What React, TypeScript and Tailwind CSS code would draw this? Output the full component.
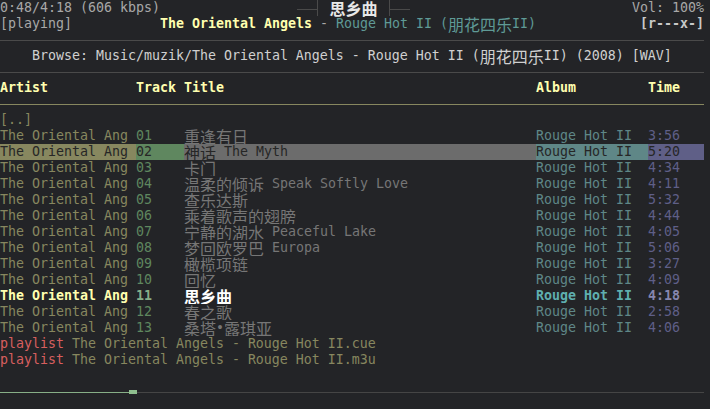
import React from "react";

const CJK = /([\u2e80-\u9fff\uf900-\ufaff\uff00-\uffef]+)/;

// splits text into latin / CJK runs; CJK is double width (16px) like in the terminal
function Txt({ s }: { s: string }) {
  return (
    <>
      {s.split(CJK).map((p, i) =>
        i % 2 === 1 ? (
          <span key={i} className="h-4 font-['Noto_Sans_CJK_SC',sans-serif] text-[16px] leading-4">
            {p}
          </span>
        ) : p ? (
          <span key={i} className="h-4 leading-4">
            {p}
          </span>
        ) : null
      )}
    </>
  );
}

const tracks = [
  ["01", "重逢有日", "3:56"],
  ["02", "神话 The Myth", "5:20"],
  ["03", "卡门", "4:34"],
  ["04", "温柔的倾诉 Speak Softly Love", "4:11"],
  ["05", "查乐达斯", "5:32"],
  ["06", "乘着歌声的翅膀", "4:44"],
  ["07", "宁静的湖水 Peaceful Lake", "4:05"],
  ["08", "梦回欧罗巴 Europa", "5:06"],
  ["09", "橄榄项链", "3:27"],
  ["10", "回忆", "4:09"],
  ["11", "思乡曲", "4:18"],
  ["12", "春之歌", "2:58"],
  ["13", "桑塔•露琪亚", "4:06"],
];

function TrackRow({ no, title, time }: { no: string; title: string; time: string }) {
  const sel = no === "02";
  const now = no === "11";
  return (
    <div className="flex h-4 overflow-hidden whitespace-pre">
      <span className={`w-[136px] shrink-0 ${sel ? "bg-[#87875f] text-[#262626]" : now ? "font-bold text-[#ffffaf]" : "text-[#87875f]"}`}>
        The Oriental Ang
      </span>
      <span className={`w-[48px] shrink-0 ${sel ? "bg-[#5f875f] text-[#262626]" : now ? "font-bold text-[#87af87]" : "text-[#5f875f]"}`}>
        {no}
      </span>
      <span className={`flex w-[352px] h-4 shrink-0 overflow-hidden ${sel ? "bg-[#6c6c6c] text-[#262626]" : now ? "font-bold text-white" : "text-[#767676]"}`}>
        <Txt s={title} />
      </span>
      <span className={`w-[112px] shrink-0 ${sel ? "bg-[#5f8787] text-[#262626]" : now ? "font-bold text-[#5fafaf]" : "text-[#5f8787]"}`}>
        Rouge Hot II
      </span>
      <span className={`w-[56px] shrink-0 ${sel ? "bg-[#5f5f87] text-[#262626]" : now ? "font-bold text-[#8787af]" : "text-[#5f5f87]"}`}>
        {time}
      </span>
    </div>
  );
}

export default function App() {
  return (
    <div className="w-[710px] h-[409px] overflow-hidden bg-[#232427] font-['DejaVu_Sans_Mono','Noto_Sans_CJK_SC',monospace] text-[13.29px] leading-4 text-[#a8a8a8]">
      {/* status header */}
      <div className="flex h-4 whitespace-pre">
        <span className="w-[297px] shrink-0">0:48/4:18 (606 kbps)</span>
        <div className="w-[20px] h-[10px] border-b border-[#4a4a4a] self-start"></div>
        <div className="w-px h-4 bg-[#4a4a4a]"></div>
        <span className="flex w-[71px] h-4 justify-center font-bold text-[#e8e8e8]">
          <Txt s="思乡曲" />
        </span>
        <div className="w-px h-4 bg-[#4a4a4a]"></div>
        <div className="w-[20px] h-[10px] border-b border-[#4a4a4a] self-start"></div>
        <span className="flex-1"></span>
        <span className="w-[72px]">Vol: 100%</span>
        <span className="w-[6px]"></span>
      </div>
      <div className="flex h-4 whitespace-pre">
        <span className="w-[160px] shrink-0">[playing]</span>
        <span className="font-bold text-[#ffffaf]">The Oriental Angels</span>
        <span> - </span>
        <span className="flex h-4 text-[#5f9a96]">
          <Txt s="Rouge Hot II (朋花四乐II)" />
        </span>
        <span className="flex-1"></span>
        <span className="w-[64px] font-bold text-[#c8c8c8]">[r---x-]</span>
        <span className="w-[6px]"></span>
      </div>
      <div className="flex h-4 items-center">
        <div className="w-[704px] h-px bg-[#4a4a4a]"></div>
      </div>
      <div className="flex h-4 whitespace-pre pl-[32px] text-[#d0d0d0]">
        <Txt s="Browse: Music/muzik/The Oriental Angels - Rouge Hot II (朋花四乐II) (2008) [WAV]" />
      </div>
      <div className="flex h-4 items-center">
        <div className="w-[704px] h-px bg-[#4a4a4a]"></div>
      </div>

      {/* column titles */}
      <div className="flex h-4 whitespace-pre font-bold text-[#ffffaf]">
        <span className="w-[136px] shrink-0">Artist</span>
        <span className="w-[400px] shrink-0">Track Title</span>
        <span className="w-[112px] shrink-0">Album</span>
        <span className="w-[56px] shrink-0">Time</span>
      </div>
      <div className="flex h-4 items-center">
        <div className="w-[704px] h-px bg-[#87875f]"></div>
      </div>

      <div className="h-4 text-[#87875f]">[..]</div>
      {tracks.map(([no, title, time]) => (
        <TrackRow key={no} no={no} title={title} time={time} />
      ))}
      <div className="h-4 whitespace-pre text-[#87875f]">
        <span className="text-[#d75f5f]">playlist</span> The Oriental Angels - Rouge Hot II.cue
      </div>
      <div className="h-4 whitespace-pre text-[#87875f]">
        <span className="text-[#d75f5f]">playlist</span> The Oriental Angels - Rouge Hot II.m3u
      </div>
      <div className="h-4"></div>

      {/* progress bar */}
      <div className="flex h-4 items-center">
        <div className="w-[129px] h-px bg-[#87af87]"></div>
        <div className="w-[8px] h-[4px] bg-[#8fbf8f]"></div>
        <div className="w-[567px] h-px bg-[#454545]"></div>
      </div>
    </div>
  );
}
